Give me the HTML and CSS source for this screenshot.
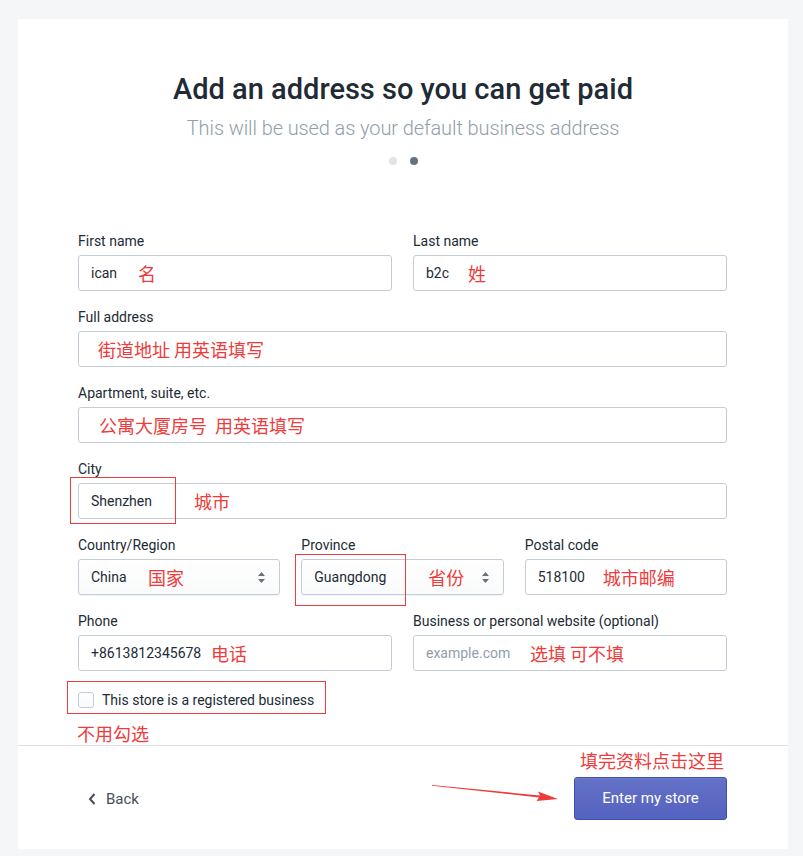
FILE: index.html
```html
<!DOCTYPE html>
<html lang="en">

<head>
    <meta charset="UTF-8">
    <meta name="viewport" content="width=device-width, initial-scale=1.0">
    <title>Add an address</title>
    <link rel="stylesheet" href="styles.css">
</head>

<body>

    <div class="card">
        <div class="header">
            <h1>Add an address so you can get paid</h1>
            <p class="subtitle">This will be used as your default business address</p>
            <div class="dots">
                <span class="dot"></span>
                <span class="dot active"></span>
            </div>
        </div>

        <div class="form">
            <div class="row two">
                <div class="field">
                    <label>First name</label>
                    <div class="input">ican<span class="note" style="left: 59px">名</span></div>
                </div>
                <div class="field">
                    <label>Last name</label>
                    <div class="input">b2c<span class="note" style="left: 54px">姓</span></div>
                </div>
            </div>

            <div class="row">
                <div class="field">
                    <label>Full address</label>
                    <div class="input"><span class="note" style="left: 19px">街道地址 用英语填写</span></div>
                </div>
            </div>

            <div class="row">
                <div class="field">
                    <label>Apartment, suite, etc.</label>
                    <div class="input"><span class="note" style="left: 20px">公寓大厦房号&nbsp; 用英语填写</span></div>
                </div>
            </div>

            <div class="row">
                <div class="field">
                    <label>City</label>
                    <div class="input">Shenzhen<span class="note" style="left: 115px">城市</span>
                        <span class="mark city-mark"></span>
                    </div>
                </div>
            </div>

            <div class="row three">
                <div class="field">
                    <label>Country/Region</label>
                    <div class="input select">China<span class="note" style="left: 69px">国家</span>
                        <svg class="arrows" width="7" height="11" viewBox="0 0 7 11"><path d="M3.5 0 L7 4 H0 Z M0 7 H7 L3.5 11 Z" fill="#637381"/></svg>
                    </div>
                </div>
                <div class="field">
                    <label>Province</label>
                    <div class="input select">Guangdong<span class="note" style="left: 126px">省份</span>
                        <svg class="arrows" width="7" height="11" viewBox="0 0 7 11"><path d="M3.5 0 L7 4 H0 Z M0 7 H7 L3.5 11 Z" fill="#637381"/></svg>
                        <span class="mark province-mark"></span>
                    </div>
                </div>
                <div class="field">
                    <label>Postal code</label>
                    <div class="input">518100<span class="note" style="left: 77px">城市邮编</span></div>
                </div>
            </div>

            <div class="row two">
                <div class="field">
                    <label>Phone</label>
                    <div class="input">+8613812345678<span class="note" style="left: 132px">电话</span></div>
                </div>
                <div class="field">
                    <label>Business or personal website (optional)</label>
                    <div class="input placeholder">example.com<span class="note" style="left: 116px">选填 可不填</span></div>
                </div>
            </div>

            <div class="check-row">
                <span class="checkbox"></span>
                <span>This store is a registered business</span>
                <span class="mark check-mark"></span>
                <span class="note check-note">不用勾选</span>
            </div>
        </div>

        <div class="footer">
            <a class="back">
                <svg width="8" height="12" viewBox="0 0 8 12"><path d="M6.5 1 L2 6 L6.5 11" fill="none" stroke="#454f5b" stroke-width="2"/></svg>
                Back
            </a>
            <svg class="arrow" width="130" height="20" viewBox="0 0 130 20"><path d="M0 2 L108 12.5 L106 8.5 L126 16 L104.5 18 L107 14.5 L0 2.8 Z" fill="#ef3b3b"/></svg>
            <div class="submit">
                <span class="note submit-note">填完资料点击这里</span>
                <button>Enter my store</button>
            </div>
        </div>
    </div>

</body>

</html>
```

FILE: styles.css
```css
body {
    margin: 0;
    padding: 19px 15px 7px 18px;
    background: #f4f6f8;
    font-family: Roboto, "Liberation Sans", "Noto Sans CJK SC", sans-serif;
    color: #212b36;
}

.card {
    width: 770px;
    height: 830px;
    background: #fff;
    display: flex;
    flex-direction: column;
}

.header {
    padding-top: 52px;
    text-align: center;
}

h1 {
    margin: 0;
    font-size: 29px;
    line-height: 36px;
    font-weight: 500;
    color: #212b36;
}

.subtitle {
    margin: 9px 0 0;
    font-size: 20px;
    line-height: 24px;
    font-weight: 300;
    letter-spacing: -0.1px;
    color: #919eab;
}

.dots {
    display: flex;
    justify-content: center;
    gap: 13px;
    margin-top: 17px;
}

.dot {
    width: 8px;
    height: 8px;
    border-radius: 50%;
    background: #dfe3e8;
}

.dot.active {
    background: #637381;
}

.form {
    padding: 66px 61px 36px 60px;
}

.row {
    display: grid;
    grid-template-columns: 1fr;
    gap: 21px;
    margin-bottom: 16px;
}

.row.two {
    grid-template-columns: 1fr 1fr;
}

.row.three {
    grid-template-columns: 1fr 1fr 1fr;
}

.field label {
    display: block;
    font-size: 14px;
    line-height: 20px;
    margin-bottom: 4px;
}

.input {
    position: relative;
    height: 36px;
    box-sizing: border-box;
    border: 1px solid #c4cdd5;
    border-radius: 3px;
    padding: 0 12px;
    display: flex;
    align-items: center;
    font-size: 14px;
    color: #212b36;
}

.input.select {
    background: linear-gradient(#fff, #f9fafb);
    box-shadow: 0 1px 0 rgba(22, 29, 37, 0.05);
}

.input.placeholder {
    color: #919eab;
}

.arrows {
    position: absolute;
    right: 14px;
    top: 12px;
}

.note {
    position: absolute;
    font-family: "Noto Sans CJK SC", sans-serif;
    font-size: 18px;
    color: #ef3b3b;
    white-space: nowrap;
    line-height: 24px;
    top: 5px;
}

.mark {
    position: absolute;
    border: 1px solid #ef3b3b;
    pointer-events: none;
}

.city-mark {
    left: -9px;
    top: -7px;
    width: 104px;
    height: 45px;
}

.province-mark {
    left: -7px;
    top: -6px;
    width: 109px;
    height: 50px;
}

.check-row {
    position: relative;
    display: flex;
    align-items: center;
    gap: 8px;
    margin-top: 20px;
    font-size: 14px;
    line-height: 18px;
}

.checkbox {
    width: 16px;
    height: 16px;
    box-sizing: border-box;
    border: 1px solid #c4cdd5;
    border-radius: 3px;
    background: linear-gradient(#fff, #f9fafb);
}

.check-mark {
    left: -11px;
    top: -10px;
    width: 257px;
    height: 31px;
}

.check-note {
    left: -1px;
    top: 30px;
}

.footer {
    border-top: 1px solid #dfe3e8;
    flex: 1;
    display: flex;
    align-items: center;
    justify-content: space-between;
    padding: 0 61px 0 70px;
    position: relative;
}

.back {
    display: flex;
    align-items: center;
    gap: 10px;
    font-size: 15px;
    color: #454f5b;
    margin-top: 2px;
}

.arrow {
    position: absolute;
    left: 414px;
    top: 37px;
}

.submit {
    position: relative;
}

.submit-note {
    left: 6px;
    top: -28px;
}

button {
    width: 153px;
    height: 43px;
    border: 1px solid #3f4eae;
    border-radius: 3px;
    background: linear-gradient(#6371c7, #5563c1);
    box-shadow: inset 0 1px 0 0 #6f7bcb;
    color: #fff;
    font-family: Roboto, "Liberation Sans", sans-serif;
    font-size: 15px;
    cursor: pointer;
    margin-top: 1px;
}
```
